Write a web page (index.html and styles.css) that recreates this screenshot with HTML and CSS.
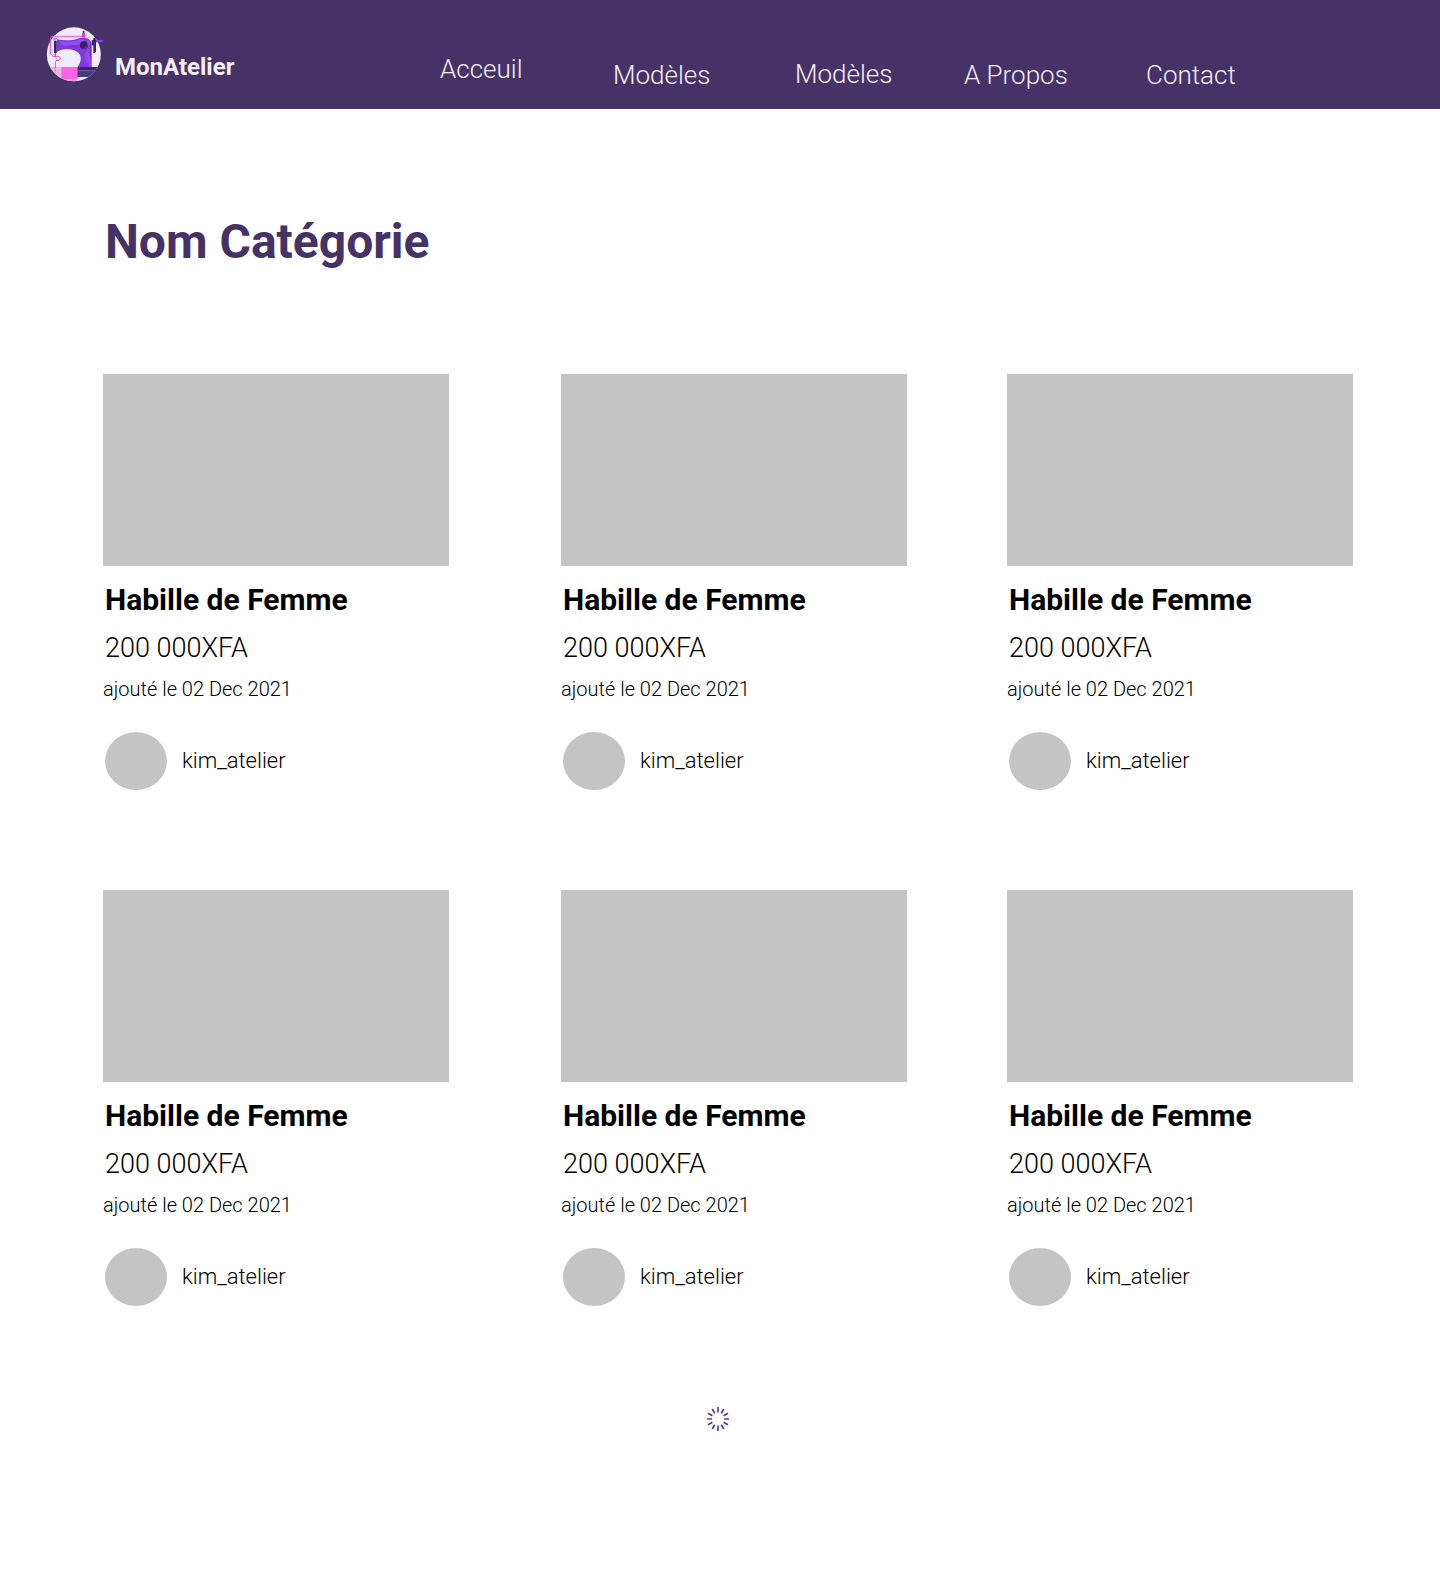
FILE: index.html
```html
<!DOCTYPE html>
<html lang="fr">
<head>
<meta charset="utf-8">
<title>MonAtelier</title>
<link rel="stylesheet" href="styles.css">
</head>
<body>
<header class="header">
  <a class="brand">
    <svg class="logo" viewBox="0 0 210 210" aria-hidden="true">
      <defs><clipPath id="disc"><circle cx="101.500" cy="103" r="81"/></clipPath></defs>
      <g clip-path="url(#disc)">
        <rect width="210" height="210" fill="#f0ebff"/>
        <path d="M30 141H81V190H30Z" fill="#efb3e3"/>
        <path d="M64 141H112V179H64Z" fill="#f765e6"/>
        <path d="M50 179H112V184H50Z" fill="#efa0e8"/>
        <path d="M112 141H185V151H112Z" fill="#3d2460"/>
        <path d="M112 151H185V171H112Z" fill="#453a85"/>
      </g>
      <path d="M50 58C75 63 102 62 120 54Q147 50 153 66V141H113Q126 121 121 107C111 85 77 86 61 91Q52 94 50 98Z" fill="#8038dc"/>
      <path d="M60 63C82 66 104 66 122 57Q134 54 138 62C119 62 127 77 99 75Q67 79 60 72Z" fill="#934af5"/>
      <path d="M140 56Q153 58 153 73V141H145V130Q132 127 134 107L144 83Z" fill="#9147f0"/>
      <path d="M148 75L155 67V141H152V116Q147 99 148 75Z" fill="#7130c5"/>
      <circle cx="131.500" cy="75.500" r="11.500" fill="#392057"/>
      <path d="M127 87L143 75Q142 87 131 87Z" fill="#493b88"/>
      <path d="M42 63H50V99H42Z" fill="#3e2360"/>
      <path d="M46 99V111" stroke="#70578d" stroke-width="3"/>
      <circle cx="45" cy="58" r="6" fill="#86afe9"/>
      <path d="M128 49H36Q31 50 31 57V95Q31 108 45 110Q62 108 61 116Q59 122 49 122Q45 123 46 134V143" fill="none" stroke="#f63fc9" stroke-width="3"/>
      <path d="M36 51H128" stroke="#f8a8e9" stroke-width="2"/>
      <path d="M131 33V40" stroke="#4a2866" stroke-width="5"/>
      <path d="M126 39H136V53H126Z" fill="#f333c3"/>
      <path d="M46 142V153" stroke="#f45bd4" stroke-width="3" stroke-dasharray="4 3"/>
      <path d="M155 60H165V76H155Z" fill="#3e2861"/>
      <path d="M160 55Q168 51 168 61V94Q167 101 160 98Z" fill="#3b2761"/>
      <path d="M168 60H189V67H168Z" fill="#8542df"/>
    </svg>
    <span class="brand-name">MonAtelier</span>
  </a>
  <nav class="nav">
    <a class="nav-link nav-home">Acceuil</a>
    <a class="nav-link nav-models">Modèles</a>
    <a class="nav-link nav-models-alt">Modèles</a>
    <a class="nav-link nav-about">A Propos</a>
    <a class="nav-link">Contact</a>
  </nav>
</header>
<main class="content">
  <h1 class="page-title">Nom Catégorie</h1>
  <section class="grid">
    <article class="card"><div class="photo"></div><h2 class="name">Habille de Femme</h2><p class="price">200 000XFA</p><p class="date">ajouté le 02 Dec 2021</p><div class="author"><span class="avatar"></span><span class="user">kim_atelier</span></div></article>
    <article class="card"><div class="photo"></div><h2 class="name">Habille de Femme</h2><p class="price">200 000XFA</p><p class="date">ajouté le 02 Dec 2021</p><div class="author"><span class="avatar"></span><span class="user">kim_atelier</span></div></article>
    <article class="card"><div class="photo"></div><h2 class="name">Habille de Femme</h2><p class="price">200 000XFA</p><p class="date">ajouté le 02 Dec 2021</p><div class="author"><span class="avatar"></span><span class="user">kim_atelier</span></div></article>
    <article class="card"><div class="photo"></div><h2 class="name">Habille de Femme</h2><p class="price">200 000XFA</p><p class="date">ajouté le 02 Dec 2021</p><div class="author"><span class="avatar"></span><span class="user">kim_atelier</span></div></article>
    <article class="card"><div class="photo"></div><h2 class="name">Habille de Femme</h2><p class="price">200 000XFA</p><p class="date">ajouté le 02 Dec 2021</p><div class="author"><span class="avatar"></span><span class="user">kim_atelier</span></div></article>
    <article class="card"><div class="photo"></div><h2 class="name">Habille de Femme</h2><p class="price">200 000XFA</p><p class="date">ajouté le 02 Dec 2021</p><div class="author"><span class="avatar"></span><span class="user">kim_atelier</span></div></article>
  </section>
  <svg class="spinner" viewBox="-12 -12 24 24" aria-label="Chargement">
    <g stroke="#57329f" stroke-width="1.700">
      <path d="M0-12V-6.500M0 6.500V12M-11-0H-6M6 0H11" stroke="#6039b8"/>
      <path d="M0-11.500V-6.500M0 6.500V11.500" transform="rotate(30)"/>
      <path d="M0-11.500V-6.500M0 6.500V11.500" transform="rotate(60)"/>
      <path d="M0-11.500V-6.500M0 6.500V11.500" transform="rotate(120)"/>
      <path d="M0-11.500V-6.500M0 6.500V11.500" transform="rotate(150)"/>
    </g>
  </svg>
</main>
</body>
</html>
```
FILE: styles.css
```css
* { box-sizing: border-box; }

body {
  margin: 0;
  min-height: 1588px;
  background: #fff;
  color: #000;
  font-family: Roboto, sans-serif;
  font-weight: 300;
}

h1, h2, p { margin: 0; }

.header {
  display: flex;
  height: 109px;
  padding: 20px 0 0 40px;
  background: #453267;
  color: #f5effa;
}

.brand { display: flex; width: 400px; gap: 5px; }
.logo { width: 70px; height: 70px; flex: none; }
.brand-name { margin-top: 33px; font-size: 24px; line-height: 28px; font-weight: 700; }

.nav { display: flex; align-items: flex-start; padding-top: 40px; }
.nav-link { font-size: 26px; line-height: 30px; white-space: nowrap; }
.nav-home { width: 173px; margin-top: -6px; }
.nav-models { width: 182px; }
.nav-models-alt { width: 169px; margin-top: -1px; }
.nav-about { width: 182px; }

.content { padding: 105px 0 0 103px; }

.page-title {
  padding-left: 2px;
  color: #453267;
  font-size: 48px;
  line-height: 56px;
  font-weight: 700;
}

.grid {
  display: grid;
  grid-template-columns: 458px 446px 346px;
  row-gap: 100px;
  margin-top: 104px;
}

.photo { width: 346px; height: 192px; background: #c4c4c4; }
.name { margin-top: 16px; padding-left: 2px; font-size: 30px; line-height: 36px; font-weight: 700; }
.price { margin-top: 14px; padding-left: 2px; font-size: 27px; line-height: 32px; }
.date { margin-top: 13px; font-size: 20px; line-height: 24px; }
.author { display: flex; gap: 15px; height: 58px; margin-top: 31px; padding-left: 2px; }
.avatar { width: 62px; height: 58px; border-radius: 50%; background: #c4c4c4; }
.user { margin-top: 15px; font-size: 22px; line-height: 27px; }

.spinner { display: block; width: 24px; height: 24px; margin: 101px 0 0 603px; }
```
